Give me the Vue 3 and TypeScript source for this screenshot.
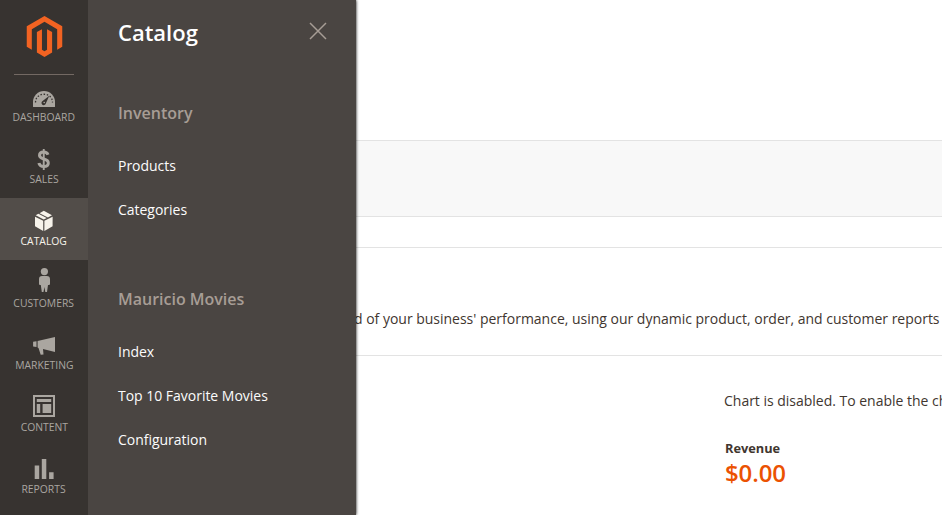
<script setup lang="ts">
interface NavItem { id: string; label: string; active?: boolean }
interface MenuGroup { title: string; links: string[] }

const navItems: NavItem[] = [
  { id: 'dashboard', label: 'Dashboard' },
  { id: 'sales', label: 'Sales' },
  { id: 'catalog', label: 'Catalog', active: true },
  { id: 'customers', label: 'Customers' },
  { id: 'marketing', label: 'Marketing' },
  { id: 'content', label: 'Content' },
  { id: 'reports', label: 'Reports' },
]

const groups: MenuGroup[] = [
  { title: 'Inventory', links: ['Products', 'Categories'] },
  { title: 'Mauricio Movies', links: ['Index', 'Top 10 Favorite Movies', 'Configuration'] },
]
</script>

<template>
  <div class="admin">
    <nav class="sidebar">
      <div class="brand">
        <svg class="logo" viewBox="0 0 24 24" aria-hidden="true">
          <path fill="#f26322" d="M12 24l-4.455-2.572v-12l2.97-1.715v12.001l1.485.902 1.485-.902V7.713l2.971 1.715v12L12 24zM22.391 6v12l-2.969 1.714V7.713L12 3.43 4.574 7.713v12.001L1.609 18V6L12 0l10.391 6z" />
        </svg>
      </div>
      <a v-for="item in navItems" :key="item.id" class="nav-item" :class="{ active: item.active }">
        <svg class="icon" viewBox="0 0 28 30" fill="currentColor" aria-hidden="true">
          <template v-if="item.id === 'dashboard'">
            <path d="M3 26.500V22a11 11 0 0 1 22 0v4.500q0 .5-.5.5h-21q-.5 0-.5-.5Z" />
            <path class="cut-line" stroke-width="1.300" stroke-dasharray="1.500 1.700" d="M5.500 22.500C5.500 11.500 22.500 11.500 22.500 22.500" />
            <path class="cut" d="M19.300 15.700 15.800 23.500a2.200 2.200 0 1 1-3.200-2.500Z" />
            <circle cx="14.200" cy="22.500" r=".8" />
          </template>
          <template v-else-if="item.id === 'sales'">
            <path fill="none" stroke="currentColor" stroke-width="3" d="M18 12.700C17.300 10.700 15.900 10 13.700 10c-2.600 0-4.200 1.200-4.200 3.300 0 2.300 1.900 3 4.300 3.700 2.700.7 4.500 1.600 4.500 4 0 2.300-1.800 3.600-4.500 3.600-2.600 0-4.400-1.200-4.900-3.600" />
            <path d="M12.800 7h1.900v21h-1.900z" />
          </template>
          <template v-else-if="item.id === 'catalog'">
            <path d="m5 12.700 8.200 4.100v10.100L5 22.200Z" />
            <path d="m22.600 12.700-8.200 4.100v10.100l8.200-4.700Z" />
            <path d="m5.700 11.300 2.700-1.500 8.300 4.300-2.900 1.500Z" />
            <path d="m9.600 9.200 4.200-2.500 8.200 4.600-4.100 2.200Z" />
          </template>
          <template v-else-if="item.id === 'customers'">
            <circle cx="14.400" cy="5.600" r="3.600" />
            <path d="M12 10h4.800c2.100 0 3.200 1.200 3.200 3.200V18q0 1-1 1l-1 .1-1 6.900h-1.700L14.400 21l-.9 5h-1.700L10.800 19.100l-.8-.1q-1-.1-1-1v-4.800c0-2 1-3.200 3-3.200Z" />
          </template>
          <template v-else-if="item.id === 'marketing'">
            <path d="m3.100 13.700 3.400-.4v5.600l-3.400-.5ZM7.600 13.100 25 9v15l-12-2.900.5 5.300-2.800.4-2.200-6.700-.9-.5Z" />
          </template>
          <template v-else-if="item.id === 'content'">
            <path fill-rule="evenodd" d="M3 5h22v22H3ZM5 7v18h18V7Z" />
            <path d="M6.800 9h14.400v3H6.800ZM6.800 14h3.400v9H6.800ZM12.600 14h8.600v9h-8.600Z" />
          </template>
          <template v-else>
            <path d="M4.700 13.500h4.500V27H4.700ZM11.800 7h4.500v20h-4.500ZM19.100 20.200h4.500V27h-4.500Z" />
          </template>
        </svg>
        <span class="nav-label">{{ item.label }}</span>
      </a>
    </nav>

    <aside class="submenu">
      <header class="submenu-head">
        <h2>Catalog</h2>
        <svg class="close" viewBox="0 0 18 18" aria-hidden="true">
          <path d="m1 1 16 16M17 1 1 17" />
        </svg>
      </header>
      <section v-for="group in groups" :key="group.title" class="group">
        <h3>{{ group.title }}</h3>
        <a v-for="link in group.links" :key="link">{{ link }}</a>
      </section>
    </aside>

    <main class="page">
      <div class="page-top"></div>
      <div class="toolbar"></div>
      <div class="spacer"></div>
      <p class="intro">d of your business' performance, using our dynamic product, order, and customer reports</p>
      <section class="stats">
        <p>Chart is disabled. To enable the ch</p>
        <div class="revenue">
          <span class="revenue-label">Revenue</span>
          <strong>$0.00</strong>
        </div>
      </section>
    </main>
  </div>
</template>

<style>
body { margin: 0; overflow: hidden; }
</style>

<style scoped>
* { box-sizing: border-box; }
.admin {
  display: flex;
  height: 515px;
  overflow: hidden;
  background: #fff;
  color: #41362f;
  font: 14px/20px "Open Sans", sans-serif;
  letter-spacing: -.012px;
}
h2, h3, p { margin: 0; }
.sidebar {
  position: relative;
  z-index: 3;
  flex: 0 0 88px;
  background: #373330;
}
.brand {
  display: flex;
  justify-content: center;
  height: 75px;
  margin: 0 14px -1px;
  padding-top: 16px;
  border-bottom: 1px solid #736963;
}
.logo { width: 41px; height: 41px; flex: none; }
.nav-item {
  display: flex;
  flex-direction: column;
  align-items: center;
  height: 62px;
  padding-top: 6px;
  color: #aaa6a0;
}
.nav-item.active { background: #524d49; color: #f7f3eb; }
.icon { width: 28px; height: 30px; flex: none; }
.cut { fill: #373330; }
.cut-line { fill: none; stroke: #373330; }
.nav-label {
  font-size: 11.5px;
  line-height: 14px;
  letter-spacing: 0;
  text-transform: uppercase;
  transform: scaleX(.9);
}
.submenu {
  position: relative;
  z-index: 2;
  flex: 0 0 268px;
  padding: 0 29px 0 30px;
  background: #4a4542;
  box-shadow: 0 0 3px #000;
}
.submenu-head {
  display: flex;
  justify-content: space-between;
  height: 98px;
  padding-top: 17px;
}
h2 { color: #fff; font-size: 22px; line-height: 30px; font-weight: 600; }
.close { width: 18px; height: 18px; margin-top: 5px; }
.close path { fill: none; stroke: #a79d95; stroke-width: 1.5; }
.group { margin-bottom: 52px; }
h3 {
  height: 46px;
  color: #a79d95;
  font-size: 16px;
  line-height: 30px;
  font-weight: 600;
}
.group a {
  display: block;
  height: 44px;
  padding-top: 12px;
  color: #fcfcfc;
  letter-spacing: -.02px;
}
.page { flex: 1; min-width: 0; }
.page-top { height: 140px; }
.toolbar {
  height: 77px;
  border: solid #e3e3e3;
  border-width: 1px 0;
  background: #f8f8f8;
}
.spacer { height: 31px; border-bottom: 1px solid #e3e3e3; }
.intro {
  height: 108px;
  margin-left: -2px;
  padding-top: 61px;
  border-bottom: 1px solid #e3e3e3;
  white-space: nowrap;
}
.stats { padding: 35px 0 0 368px; white-space: nowrap; }
.revenue { display: flex; flex-direction: column; padding: 28px 0 0 1px; }
.revenue-label { font-size: 12.8px; line-height: 18px; font-weight: 700; }
strong { color: #eb5202; font-size: 24px; line-height: 32px; font-weight: 600; letter-spacing: -.1px; }
</style>
